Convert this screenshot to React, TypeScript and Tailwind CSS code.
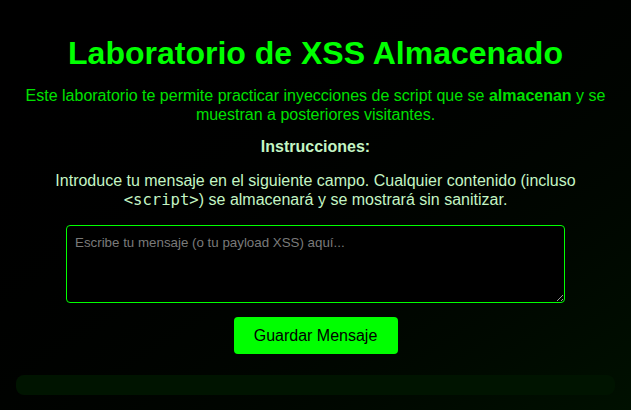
import React from "react";

const SANS = { fontFamily: '"Liberation Sans", Arial, sans-serif' };

export default function App() {
  return (
    <div
      className="min-h-screen w-full bg-gradient-to-br from-black to-[#001000] px-4 pt-[35px] text-center"
      style={SANS}
    >
      <h1 className="text-[32px] font-bold leading-[37px] text-[#00ff00]">
        Laboratorio de XSS Almacenado
      </h1>

      <p className="mx-auto mt-[14px] max-w-[590px] text-base leading-[19px] text-[#00e000]">
        Este laboratorio te permite practicar inyecciones de script que se{" "}
        <strong className="font-bold">almacenan</strong> y se muestran a posteriores visitantes.
      </p>

      <p className="mt-[13px] text-base font-bold leading-[19px] text-[#c4f5c4]">Instrucciones:</p>

      <p className="mx-auto mt-[15px] max-w-[540px] text-base leading-[19px] text-[#c4f5c4]">
        Introduce tu mensaje en el siguiente campo. Cualquier contenido (incluso{" "}
        <code style={{ fontFamily: '"DejaVu Sans Mono", monospace' }} className="text-[15.6px]">
          &lt;script&gt;
        </code>
        ) se almacenará y se mostrará sin sanitizar.
      </p>

      <form className="mt-[15px] flex flex-col items-center" onSubmit={(e) => e.preventDefault()}>
        <textarea
          placeholder="Escribe tu mensaje (o tu payload XSS) aquí..."
          className="h-[78px] w-[499px] rounded-[4px] border border-[#00ff00] bg-black px-2 py-[7px] text-[13.33px] text-[#00ff00] outline-none placeholder:text-[#7a7a7a]"
          style={SANS}
        />
        <button
          type="submit"
          className="mt-[14px] h-[37px] w-[164px] rounded-[4px] bg-[#00ff00] text-base text-black"
          style={SANS}
        >
          Guardar Mensaje
        </button>
      </form>

      <div className="mt-[21px] h-[20px] rounded-lg bg-[#001400]" />
    </div>
  );
}
